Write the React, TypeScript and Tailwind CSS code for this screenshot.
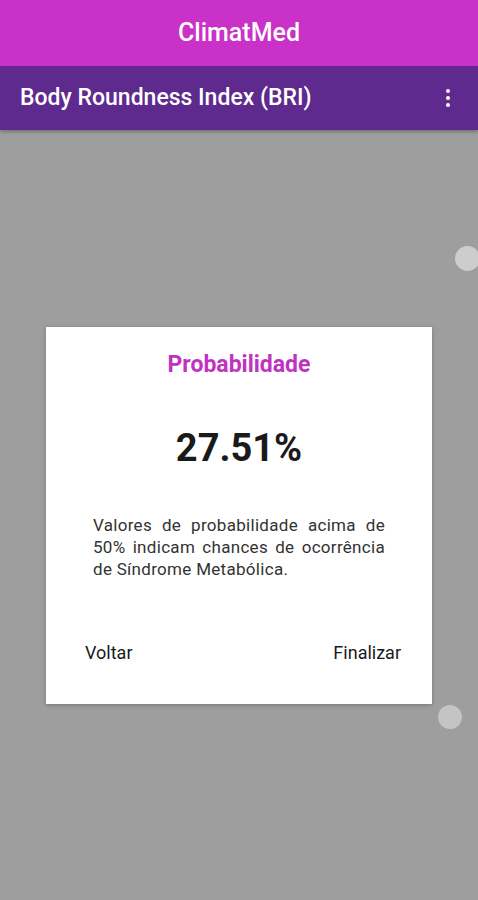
import React from "react";

export default function App() {
  return (
    <div className="relative flex h-[900px] w-[478px] flex-col overflow-hidden bg-[#9e9e9e] font-['Roboto','Liberation_Sans',sans-serif]">
      <header className="flex h-[66px] shrink-0 items-center justify-center bg-[#c931c8]">
        <h1 className="text-[25px] font-medium text-white">ClimatMed</h1>
      </header>
      <div className="flex h-[64px] shrink-0 items-center justify-between bg-[#5f2a8d] pl-[20px] pr-[18px] shadow-[0_2px_3px_rgba(0,0,0,0.25)]">
        <span className="text-[23px] font-medium text-white">Body Roundness Index (BRI)</span>
        <svg width="24" height="24" viewBox="0 0 24 24" fill="white">
          <circle cx="12" cy="5" r="2" />
          <circle cx="12" cy="12" r="2" />
          <circle cx="12" cy="19" r="2" />
        </svg>
      </div>

      <main className="flex flex-1 items-center justify-center">
        <div className="flex h-[377px] w-[386px] flex-col bg-white shadow-[0_1px_4px_rgba(0,0,0,0.25)]">
          <h2 className="mt-[23px] text-center text-[23px] font-bold leading-[30px] text-[#c032c0]">Probabilidade</h2>
          <p className="mt-[46px] text-center text-[38px] font-bold leading-[44px] text-[#1a1a1a]">27.51%</p>
          <p className="mt-[44px] px-[47px] text-justify text-[17px] leading-[22px] tracking-[0.3px] text-[#333]">
            Valores de probabilidade acima de 50% indicam chances de ocorrência de Síndrome Metabólica.
          </p>
          <div className="mt-auto mb-[38px] flex items-center justify-between pl-[39px] pr-[31px]">
            <button className="text-[18px] font-normal text-[#1a1a1a]">Voltar</button>
            <button className="text-[18px] font-normal text-[#1a1a1a]">Finalizar</button>
          </div>
        </div>
      </main>

      <div className="absolute left-[455px] top-[246px] h-[25px] w-[25px] rounded-full bg-[#cdcdcd]" />
      <div className="absolute left-[438px] top-[705px] h-[24px] w-[24px] rounded-full bg-[#c4c4c4]" />
    </div>
  );
}
